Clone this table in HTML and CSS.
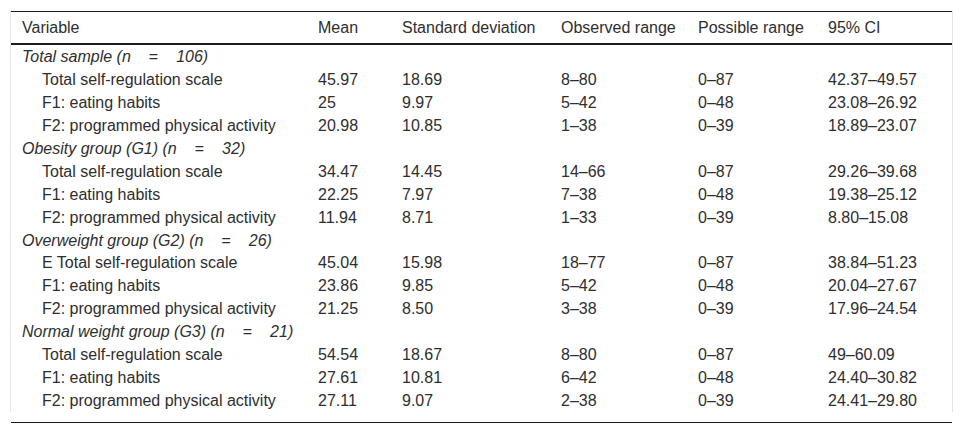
FILE: index.html
```html
<!DOCTYPE html>
<html lang="en">
<head>
<meta charset="utf-8">
<title>Self-regulation scale</title>
<link rel="stylesheet" href="styles.css">
</head>
<body>
<div class="wrap">
<table class="tbl">
<colgroup>
<col class="c1"><col class="c2"><col class="c3"><col class="c4"><col class="c5"><col class="c6">
</colgroup>
<thead>
<tr><th>Variable</th><th>Mean</th><th>Standard deviation</th><th>Observed range</th><th>Possible range</th><th>95% CI</th></tr>
</thead>
<tbody>
<tr class="grp"><td colspan="6">Total sample (n<span class="eq">=</span>106)</td></tr>
<tr><td class="ind">Total self-regulation scale</td><td>45.97</td><td>18.69</td><td>8–80</td><td>0–87</td><td>42.37–49.57</td></tr>
<tr><td class="ind">F1: eating habits</td><td>25</td><td>9.97</td><td>5–42</td><td>0–48</td><td>23.08–26.92</td></tr>
<tr><td class="ind">F2: programmed physical activity</td><td>20.98</td><td>10.85</td><td>1–38</td><td>0–39</td><td>18.89–23.07</td></tr>
<tr class="grp"><td colspan="6">Obesity group (G1) (n<span class="eq">=</span>32)</td></tr>
<tr><td class="ind">Total self-regulation scale</td><td>34.47</td><td>14.45</td><td>14–66</td><td>0–87</td><td>29.26–39.68</td></tr>
<tr><td class="ind">F1: eating habits</td><td>22.25</td><td>7.97</td><td>7–38</td><td>0–48</td><td>19.38–25.12</td></tr>
<tr><td class="ind">F2: programmed physical activity</td><td>11.94</td><td>8.71</td><td>1–33</td><td>0–39</td><td>8.80–15.08</td></tr>
<tr class="grp"><td colspan="6">Overweight group (G2) (n<span class="eq">=</span>26)</td></tr>
<tr><td class="ind">E Total self-regulation scale</td><td>45.04</td><td>15.98</td><td>18–77</td><td>0–87</td><td>38.84–51.23</td></tr>
<tr><td class="ind">F1: eating habits</td><td>23.86</td><td>9.85</td><td>5–42</td><td>0–48</td><td>20.04–27.67</td></tr>
<tr><td class="ind">F2: programmed physical activity</td><td>21.25</td><td>8.50</td><td>3–38</td><td>0–39</td><td>17.96–24.54</td></tr>
<tr class="grp"><td colspan="6">Normal weight group (G3) (n<span class="eq">=</span>21)</td></tr>
<tr><td class="ind">Total self-regulation scale</td><td>54.54</td><td>18.67</td><td>8–80</td><td>0–87</td><td>49–60.09</td></tr>
<tr><td class="ind">F1: eating habits</td><td>27.61</td><td>10.81</td><td>6–42</td><td>0–48</td><td>24.40–30.82</td></tr>
<tr><td class="ind">F2: programmed physical activity</td><td>27.11</td><td>9.07</td><td>2–38</td><td>0–39</td><td>24.41–29.80</td></tr>
</tbody>
</table>
</div>
<div class="foot"></div>
</body>
</html>
```
FILE: styles.css
```css
html, body {
  margin: 0;
  padding: 0;
  background: #fff;
}
body {
  padding: 11px 0 0 10px;
  font-family: "Liberation Sans", Arial, sans-serif;
  font-size: 16px;
  color: #2e2e2e;
}
.wrap {
  width: 941px;
  border-left: 1px solid #e4e4e4;
  border-right: 1px solid #e4e4e4;
}
.tbl {
  width: 941px;
  border-collapse: collapse;
  table-layout: fixed;
  border-top: 1px solid #1a1a1a;
}
.c1 { width: 296px; }
.c2 { width: 84px; }
.c3 { width: 159px; }
.c4 { width: 137px; }
.c5 { width: 130px; }
.c6 { width: 135px; }
.tbl th {
  font-weight: normal;
  text-align: left;
  padding: 7px 0 7px 11px;
  line-height: 17px;
  border-bottom: 2px solid #1a1a1a;
  white-space: nowrap;
}
.tbl td {
  padding: 3px 0 2.94px 11px;
  line-height: 17px;
  white-space: nowrap;
}
.tbl td.ind {
  padding-left: 31px;
}
.grp td {
  font-style: italic;
}
.eq {
  font-style: normal;
  margin: 0 18px;
}
.foot {
  margin-left: 1px;
  width: 941px;
  height: 10px;
  border-bottom: 1px solid #1a1a1a;
}
```
